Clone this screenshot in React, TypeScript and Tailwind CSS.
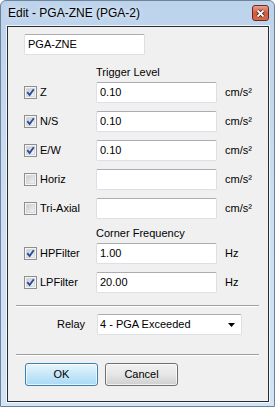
import React from 'react';

const rows = [
  { label: 'Z', checked: true, value: '0.10', unit: 'cm/s²' },
  { label: 'N/S', checked: true, value: '0.10', unit: 'cm/s²' },
  { label: 'E/W', checked: true, value: '0.10', unit: 'cm/s²' },
  { label: 'Horiz', checked: false, value: '', unit: 'cm/s²' },
  { label: 'Tri-Axial', checked: false, value: '', unit: 'cm/s²' },
];

const filters = [
  { label: 'HPFilter', checked: true, value: '1.00', unit: 'Hz' },
  { label: 'LPFilter', checked: true, value: '20.00', unit: 'Hz' },
];

const Check = ({ checked }: { checked: boolean }) => (
  <div className="w-[13px] h-[13px] shrink-0 border border-[#8e8f8f] bg-[#f4f4f4] p-[1px]">
    <div className="w-full h-full bg-linear-to-br from-[#c9ccd2] to-[#f4f4f4] border border-[#d7d9dd]">
      {checked && (
        <svg width="9" height="9" viewBox="0 0 9 9" className="-m-[1px]">
          <path d="M1.3 4.2 L3.6 7 L7.8 1.2" fill="none" stroke="#2a4a9c" strokeWidth="1.9" />
        </svg>
      )}
    </div>
  </div>
);

const Field = ({ value }: { value: string }) => (
  <div className="w-[121px] h-[21px] bg-white border border-[#dbdfe6] border-t-[#abadb3] rounded-[2px] flex items-center pl-[3px]">
    {value}
  </div>
);

const Row = ({ r }: { r: { label: string; checked: boolean; value: string; unit: string } }) => (
  <div className="flex items-center h-[21px] mt-[8px] first:mt-0">
    <div className="w-[72px] flex items-center gap-[3px]">
      <Check checked={r.checked} />
      <span>{r.label}</span>
    </div>
    <Field value={r.value} />
    <span className="ml-[8px]">{r.unit}</span>
  </div>
);

const Separator = () => (
  <div className="ml-[8px] w-[243px] border-t border-[#a0a0a0] border-b border-b-white" />
);

export default function App() {
  return (
    <div className="w-[275px] h-[407px] border border-[#6f8298] rounded-t-[6px] bg-linear-to-b from-[#bcd3ec] via-[#cbdef3] to-[#d0e3f7] font-['Liberation_Sans',Arial,sans-serif] text-[11px] text-black flex flex-col overflow-hidden">
      {/* title bar */}
      <div className="h-[25px] flex items-start justify-between pl-[7px] pr-[5px]">
        <span className="mt-[5px] text-[12px] leading-[14px] [text-shadow:0_0_6px_rgba(255,255,255,0.95)]">
          Edit - PGA-ZNE (PGA-2)
        </span>
        <div className="mt-[4px] w-[17px] h-[16px] rounded-[3px] border border-[#6b2a1f] bg-linear-to-b from-[#e8a08c] via-[#cf5a3f] to-[#d86a48] flex items-center justify-center">
          <svg width="9" height="9" viewBox="0 0 9 9">
            <path d="M1.5 1.5 L7.5 7.5 M7.5 1.5 L1.5 7.5" stroke="#3a1a14" strokeWidth="3.2" />
            <path d="M1.5 1.5 L7.5 7.5 M7.5 1.5 L1.5 7.5" stroke="#ffffff" strokeWidth="1.8" />
          </svg>
        </div>
      </div>

      {/* client area */}
      <div className="ml-[6px] w-[262px] h-[376px] border border-[#2b2b2b] bg-[#f0f0f0] shadow-[0_0_0_1px_rgba(255,255,255,0.7)] flex flex-col">
        <div className="ml-[16px] mt-[7px]">
          <Field value="PGA-ZNE" />
        </div>

        <div className="pl-[16px]">
          <div className="ml-[72px] mt-[11px] h-[13px] leading-[13px]">Trigger Level</div>
          <div className="mt-[3px] flex flex-col">
            {rows.map((r) => (
              <Row key={r.label} r={r} />
            ))}
          </div>
          <div className="ml-[72px] mt-[8px] h-[13px] leading-[13px]">Corner Frequency</div>
          <div className="mt-[3px] flex flex-col">
            {filters.map((r) => (
              <Row key={r.label} r={r} />
            ))}
          </div>
        </div>

        <div className="mt-[12px]">
          <Separator />
        </div>

        <div className="mt-[7px] flex items-center h-[21px] pl-[49px]">
          <span className="w-[40px]">Relay</span>
          <div className="w-[145px] h-[21px] bg-white border border-[#dbdfe6] border-t-[#abadb3] rounded-[2px] flex items-center justify-between pl-[2px] pr-[6px]">
            <span>4 - PGA Exceeded</span>
            <svg width="7" height="4" viewBox="0 0 7 4">
              <path d="M0 0 L7 0 L3.5 4 Z" fill="#000" />
            </svg>
          </div>
        </div>

        <div className="mt-[19px]">
          <Separator />
        </div>

        <div className="mt-[7px] flex pl-[17px] gap-[7px]">
          <button className="w-[73px] h-[23px] rounded-[3px] border border-[#3c7fb1] bg-linear-to-b from-[#e8f6fd] via-[#c6e7f8] to-[#a9daf5] shadow-[inset_0_0_0_1px_rgba(255,255,255,0.7)] flex items-center justify-center">
            OK
          </button>
          <button className="w-[73px] h-[23px] rounded-[3px] border border-[#707070] bg-linear-to-b from-[#f2f2f2] via-[#e6e6e6] to-[#cfcfcf] shadow-[inset_0_0_0_1px_rgba(255,255,255,0.7)] flex items-center justify-center">
            Cancel
          </button>
        </div>
      </div>
    </div>
  );
}
